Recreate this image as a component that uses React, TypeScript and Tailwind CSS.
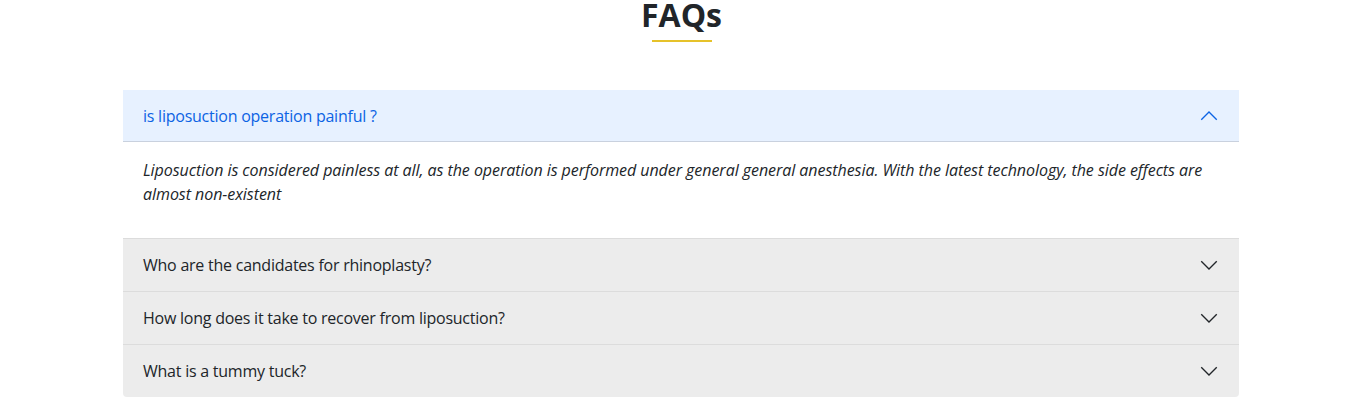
import { useState } from "react";

const faqs = [
  {
    q: "is liposuction operation painful ?",
    a: "Liposuction is considered painless at all, as the operation is performed under general general anesthesia. With the latest technology, the side effects are almost non-existent",
  },
  { q: "Who are the candidates for rhinoplasty?", a: "" },
  { q: "How long does it take to recover from liposuction?", a: "" },
  { q: "What is a tummy tuck?", a: "" },
];

const Chevron = ({ up }: { up: boolean }) => (
  <svg
    width="20"
    height="20"
    viewBox="0 0 16 16"
    fill="none"
    stroke="currentColor"
    strokeWidth="1.1"
    className={up ? "rotate-180" : ""}
  >
    <path d="M1.8 5l6.2 6.2 6.2-6.2" />
  </svg>
);

export default function App() {
  const [open, setOpen] = useState(0);

  return (
    <div className="bg-white min-h-[403px] font-['Open_Sans',sans-serif] text-[#212529]">
      <div className="flex flex-col items-center -mt-[4px]">
        <h2 className="text-[32px] font-bold leading-[1.2]">FAQs</h2>
        <div className="w-[60px] h-[2px] bg-[#e6c22a] mt-[6px]" />
      </div>

      <div className="w-[1116px] ml-[123px] mt-[48px] rounded-b-[4px] overflow-hidden">
        {faqs.map((f, i) => {
          const active = open === i;
          return (
            <div key={i} className={i > 0 ? "border-t border-[#dcdcdc]" : ""}>
              <button
                onClick={() => setOpen(active ? -1 : i)}
                className={
                  active
                    ? "w-full h-[52px] flex items-center justify-between px-5 text-left text-[16px] tracking-[-0.24px] bg-[#e7f1ff] text-[#0c63e4] shadow-[inset_0_-1px_0_rgba(0,0,0,0.13)]"
                    : "w-full h-[52px] flex items-center justify-between px-5 text-left text-[16px] tracking-[-0.24px] bg-[#ececec] text-[#212529]"
                }
              >
                <span>{f.q}</span>
                <Chevron up={active} />
              </button>
              {active && f.a && (
                <div className="px-5 pt-4 pb-4 bg-white">
                  <p className="italic text-[16px] leading-6 mb-4 tracking-[-0.05px]">{f.a}</p>
                </div>
              )}
            </div>
          );
        })}
      </div>
    </div>
  );
}
